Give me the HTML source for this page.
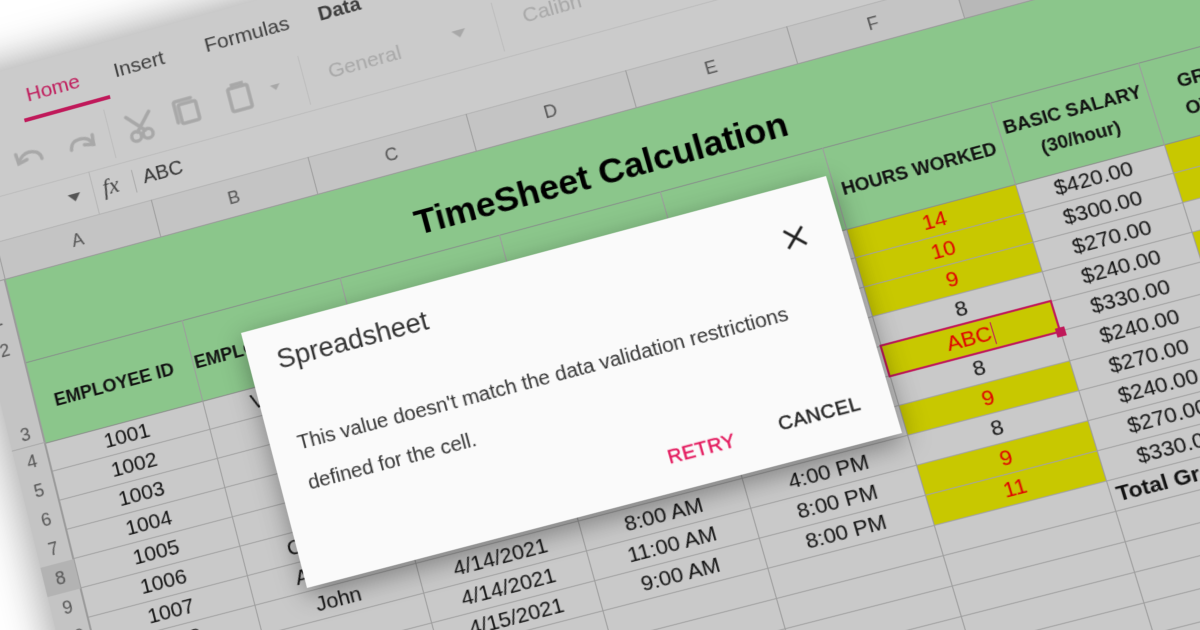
<!DOCTYPE html>
<html><head><meta charset="utf-8"><style>
html,body{margin:0;padding:0;width:1200px;height:630px;overflow:hidden;background:#fff;font-family:"Liberation Sans",sans-serif}
#clip{position:relative;width:1200px;height:630px;overflow:hidden}
#w{position:absolute;left:0;top:0;width:0;height:0;transform-origin:0 0;
transform:matrix3d(0.96824,-0.27107,0,-0.000028198, 0.23469,0.94034,0,-0.000056038, 0,0,1,0, 241,333,0,1)}
#w div{position:absolute;box-sizing:border-box}
.c{text-align:center;height:30px;line-height:30px;font-size:21px;color:#111;white-space:nowrap}
.r{color:#e00000}
.vl{width:1px;background:#9c9c9c}
.hd{font-weight:bold;font-size:18px;color:#111;text-align:center;white-space:nowrap;line-height:28px}
.cl{font-size:18px;color:#555;text-align:center;width:162px;top:-150px;line-height:30px}
.rl{font-size:18px;color:#555;text-align:center;width:34px;left:-250px;line-height:30px;height:30px}
.y{background:#c8c800;height:29px}
.tab{font-size:21px;color:#3c3c3c;top:-308px;line-height:30px;white-space:nowrap}
</style></head><body><div id="clip">
<div id="w">
<div style="left:-250px;top:-325px;width:1700px;height:900px;background:#cbcbcb;box-shadow:0 0 40px 6px rgba(0,0,0,.35)"></div>
<div class="tab" style="left:-150px;color:#c0195a">Home</div>
<div style="left:-158px;top:-271px;width:90px;height:4px;background:#c0195a"></div>
<div class="tab" style="left:-58px">Insert</div>
<div class="tab" style="left:37px">Formulas</div>
<div class="tab" style="left:155px;font-weight:bold;font-size:20px">Data</div>
<div style="left:-250px;top:-200px;width:1700px;height:1px;background:#bcbcbc"></div>
<svg style="position:absolute;left:-180px;top:-250px;overflow:visible" width="300" height="40">
<g fill="none" stroke="#a8a8a8" stroke-width="3.5" stroke-linecap="round">
<path d="M6 22 Q14 10 26 16 Q30 19 30 24"/><path d="M5 13 L6 23 L15 21"/>
<path d="M84 24 Q80 12 66 16 Q62 18 61 24" /><path d="M85 14 L84 24 L75 22"/>
<circle cx="128" cy="28" r="5"/><circle cx="140" cy="28" r="5"/><path d="M130 24 L146 6 M138 24 L122 6"/>
<rect x="176" y="8" width="18" height="20" rx="2"/><path d="M172 26 V6 a2 2 0 0 1 2 -2 H190"/>
<rect x="228" y="6" width="20" height="24" rx="2"/><path d="M233 6 V3 H243 V6"/>
</g><path d="M270 14 L280 14 L275 20 Z" fill="#a8a8a8"/></svg>
<div style="left:-78px;top:-258px;width:1px;height:52px;background:#bdbdbd"></div>
<div style="left:124px;top:-258px;width:1px;height:52px;background:#bdbdbd"></div>
<div style="left:150px;top:-248px;font-size:21px;color:#a8a8a8;line-height:30px">General</div>
<svg style="position:absolute;left:278px;top:-240px" width="16" height="10"><path d="M0 0 L14 0 L7 8 Z" fill="#a8a8a8"/></svg>
<div style="left:323px;top:-258px;width:1px;height:52px;background:#bdbdbd"></div>
<div style="left:350px;top:-250px;font-size:21px;color:#a8a8a8;line-height:30px">Calibri</div>
<div style="left:-108px;top:-200px;width:1px;height:45px;background:#b5b5b5"></div>
<svg style="position:absolute;left:-134px;top:-182px" width="14" height="9"><path d="M0 0 L13 0 L6.5 8 Z" fill="#555"/></svg>
<div style="left:-98px;top:-196px;font-size:23px;font-style:italic;font-family:'Liberation Serif',serif;color:#444;line-height:34px">fx</div>
<div style="left:-66px;top:-190px;width:1px;height:24px;background:#aaa"></div>
<div style="left:-56px;top:-195px;font-size:20px;color:#333;line-height:32px">ABC</div>
<div style="left:-250px;top:-155px;width:1700px;height:40px;background:#c4c4c4;border-top:1px solid #b3b3b3;border-bottom:1px solid #999"></div>
<div style="left:760px;top:-155px;width:690px;height:40px;background:#b8b8b8;border-bottom:1px solid #999"></div>
<div class="cl" style="left:-216px">A</div><div class="cl" style="left:-54px">B</div><div class="cl" style="left:108px">C</div>
<div class="cl" style="left:270px">D</div><div class="cl" style="left:432px">E</div><div class="cl" style="left:594px">F</div>
<div style="left:-250px;top:-115px;width:34px;height:690px;background:#c4c4c4;border-right:1px solid #999"></div>
<div style="left:-250px;top:176px;width:34px;height:30px;background:#b3b3b3"></div>
<div style="left:-250px;top:-115px;width:34px;height:690px;background:repeating-linear-gradient(to bottom,transparent 0 170px,#a8a8a8 170px 171px,transparent 171px 201px)"></div>
<div class="rl" style="top:-92px">1</div><div class="rl" style="top:-60px">2</div><div class="rl" style="top:28px">3</div>
<div class="rl" style="top:56px">4</div><div class="rl" style="top:86px">5</div><div class="rl" style="top:116px">6</div>
<div class="rl" style="top:146px">7</div><div class="rl" style="top:176px">8</div><div class="rl" style="top:206px">9</div>
<div class="rl" style="top:236px">10</div><div class="rl" style="top:266px">11</div>
<div style="left:-216px;top:56px;width:1666px;height:519px;background:#c9c9c9 repeating-linear-gradient(to bottom,transparent 0 29px,#a2a2a2 29px 30px)"></div>
<div class="y" style="left:594px;top:56px;width:166px"></div>
<div class="y" style="left:594px;top:86px;width:166px"></div>
<div class="y" style="left:594px;top:116px;width:166px"></div>
<div class="y" style="left:594px;top:176px;width:166px"></div>
<div class="y" style="left:594px;top:236px;width:166px"></div>
<div class="y" style="left:594px;top:296px;width:166px"></div>
<div class="y" style="left:594px;top:326px;width:166px"></div>
<div class="y" style="left:905px;top:56px;width:160px"></div>
<div class="y" style="left:905px;top:86px;width:160px"></div>
<div class="y" style="left:905px;top:146px;width:160px"></div>
<div style="left:-216px;top:-115px;width:1666px;height:172px;background:#8bc68b;border-bottom:1px solid #8a8f8a"></div>
<div style="left:-216px;top:-28px;width:1666px;height:1px;background:#86908a"></div>
<div class="vl" style="left:-216px;top:-155px;height:730px"></div>
<div class="vl" style="left:-54px;top:-155px;height:40px"></div><div class="vl" style="left:-54px;top:-28px;height:600px"></div>
<div class="vl" style="left:108px;top:-155px;height:40px"></div><div class="vl" style="left:108px;top:-28px;height:600px"></div>
<div class="vl" style="left:270px;top:-155px;height:40px"></div><div class="vl" style="left:270px;top:-28px;height:600px"></div>
<div class="vl" style="left:432px;top:-155px;height:40px"></div><div class="vl" style="left:432px;top:-28px;height:600px"></div>
<div class="vl" style="left:594px;top:-155px;height:40px"></div><div class="vl" style="left:594px;top:-28px;height:600px"></div>
<div class="vl" style="left:760px;top:-155px;height:40px"></div><div class="vl" style="left:760px;top:-28px;height:600px"></div>
<div class="vl" style="left:905px;top:-155px;height:40px"></div><div class="vl" style="left:905px;top:-28px;height:600px"></div>
<div class="vl" style="left:1065px;top:-155px;height:40px"></div><div class="vl" style="left:1065px;top:-28px;height:600px"></div>
<div style="left:-100px;top:-85px;width:962px;text-align:center;font-size:35px;font-weight:bold;color:#000;line-height:50px;white-space:nowrap">TimeSheet Calculation</div>
<div class="hd" style="left:-216px;top:3px;width:162px">EMPLOYEE ID</div>
<div class="hd" style="left:-54px;top:3px;width:162px">EMPLOYEE NAME</div>
<div class="hd" style="left:108px;top:3px;width:162px">DATE</div>
<div class="hd" style="left:270px;top:3px;width:162px">TIME IN</div>
<div class="hd" style="left:432px;top:3px;width:162px">TIME OUT</div>
<div class="hd" style="left:594px;top:3px;width:166px">HOURS WORKED</div>
<div class="hd" style="left:760px;top:-14px;width:145px">BASIC SALARY<br>(30/hour)</div>
<div class="hd" style="left:935px;top:-14px;text-align:left">GROSS<br>OVERTIME</div>
<div class="c" style="left:-216px;top:56px;width:162px">1001</div>
<div class="c" style="left:-216px;top:86px;width:162px">1002</div>
<div class="c" style="left:-216px;top:116px;width:162px">1003</div>
<div class="c" style="left:-216px;top:146px;width:162px">1004</div>
<div class="c" style="left:-216px;top:176px;width:162px">1005</div>
<div class="c" style="left:-216px;top:206px;width:162px">1006</div>
<div class="c" style="left:-216px;top:236px;width:162px">1007</div>
<div class="c" style="left:-216px;top:266px;width:162px">1008</div>
<div class="c" style="left:-54px;top:56px;width:162px">Vincent</div>
<div class="c" style="left:-54px;top:86px;width:162px">Sam</div>
<div class="c" style="left:-54px;top:116px;width:162px">Paul</div>
<div class="c" style="left:-54px;top:146px;width:162px">Mary</div>
<div class="c" style="left:-54px;top:176px;width:162px">Ben</div>
<div class="c" style="left:-54px;top:206px;width:162px">Charles</div>
<div class="c" style="left:-54px;top:236px;width:162px">Andrew</div>
<div class="c" style="left:-54px;top:266px;width:162px">John</div>
<div class="c" style="left:108px;top:206px;width:162px">4/13/2021</div>
<div class="c" style="left:108px;top:236px;width:162px">4/13/2021</div>
<div class="c" style="left:108px;top:266px;width:162px">4/14/2021</div>
<div class="c" style="left:108px;top:296px;width:162px">4/14/2021</div>
<div class="c" style="left:108px;top:326px;width:162px">4/15/2021</div>
<div class="c" style="left:270px;top:236px;width:162px">9:00 AM</div>
<div class="c" style="left:270px;top:266px;width:162px">8:00 AM</div>
<div class="c" style="left:270px;top:296px;width:162px">11:00 AM</div>
<div class="c" style="left:270px;top:326px;width:162px">9:00 AM</div>
<div class="c" style="left:432px;top:236px;width:162px">6:00 PM</div>
<div class="c" style="left:432px;top:266px;width:162px">4:00 PM</div>
<div class="c" style="left:432px;top:296px;width:162px">8:00 PM</div>
<div class="c" style="left:432px;top:326px;width:162px">8:00 PM</div>
<div class="c r" style="left:594px;top:56px;width:166px">14</div>
<div class="c r" style="left:594px;top:86px;width:166px">10</div>
<div class="c r" style="left:594px;top:116px;width:166px">9</div>
<div class="c" style="left:594px;top:146px;width:166px">8</div>
<div class="c r" style="left:594px;top:176px;width:166px">ABC<span style="display:inline-block;width:1px;height:22px;background:#c0195a;vertical-align:middle;margin-left:1px"></span></div>
<div class="c" style="left:594px;top:206px;width:166px">8</div>
<div class="c r" style="left:594px;top:236px;width:166px">9</div>
<div class="c" style="left:594px;top:266px;width:166px">8</div>
<div class="c r" style="left:594px;top:296px;width:166px">9</div>
<div class="c r" style="left:594px;top:326px;width:166px">11</div>
<div style="left:593px;top:174px;width:168px;height:33px;border:2.5px solid #c0195a"></div>
<div style="left:756px;top:202px;width:9px;height:9px;background:#c0195a"></div>
<div class="c" style="left:760px;top:56px;width:145px">$420.00</div>
<div class="c" style="left:760px;top:86px;width:145px">$300.00</div>
<div class="c" style="left:760px;top:116px;width:145px">$270.00</div>
<div class="c" style="left:760px;top:146px;width:145px">$240.00</div>
<div class="c" style="left:760px;top:176px;width:145px">$330.00</div>
<div class="c" style="left:760px;top:206px;width:145px">$240.00</div>
<div class="c" style="left:760px;top:236px;width:145px">$270.00</div>
<div class="c" style="left:760px;top:266px;width:145px">$240.00</div>
<div class="c" style="left:760px;top:296px;width:145px">$270.00</div>
<div class="c" style="left:760px;top:326px;width:145px">$330.00</div>
<div class="c" style="left:766px;top:356px;text-align:left;font-weight:bold">Total Gross Pay</div>
<div style="left:0;top:0;width:590px;height:262px;background:#fafafa;box-shadow:0 8px 24px rgba(0,0,0,.38)"></div>
<div style="left:28px;top:23px;font-size:27px;line-height:27px;color:#333;white-space:nowrap">Spreadsheet</div>
<svg style="position:absolute;left:534px;top:40px" width="22" height="22"><path d="M2 2 L20 20 M20 2 L2 20" stroke="#222" stroke-width="2.6"/></svg>
<div style="left:27px;top:102px;font-size:20px;line-height:41px;color:#333;white-space:nowrap">This value doesn't match the data validation restrictions<br>defined for the cell.</div>
<div style="left:353px;top:214px;width:100px;text-align:center;font-size:19px;line-height:30px;color:#e3165b;letter-spacing:.5px;-webkit-text-stroke:.4px #e3165b">RETRY</div>
<div style="left:465px;top:210px;width:110px;text-align:center;font-size:19px;line-height:30px;color:#222;letter-spacing:.5px;-webkit-text-stroke:.4px #222">CANCEL</div>
</div>
</div></body></html>
